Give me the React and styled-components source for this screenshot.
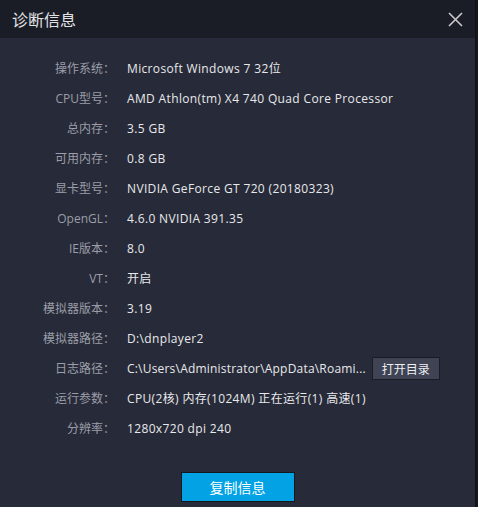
import React from "react";
import styled, { createGlobalStyle } from "styled-components";

const GlobalStyle = createGlobalStyle`
  html, body {
    margin: 0;
    padding: 0;
    background: #15171e;
  }
  body {
    font-family: "Open Sans", "Noto Sans CJK SC", sans-serif;
  }
`;

const Page = styled.div`
  display: flex;
  width: 478px;
  height: 507px;
  overflow: hidden;
`;

const Dialog = styled.div`
  width: 476px;
  height: 507px;
  display: flex;
  flex-direction: column;
  background: #272a38;
  border-right: 1px solid #101117;
  box-sizing: border-box;
`;

const Header = styled.div`
  height: 38px;
  flex: 0 0 38px;
  display: flex;
  align-items: center;
  justify-content: space-between;
  padding: 0 12px 0 12px;
  background: #1b1d26;
  box-sizing: border-box;
`;

const Title = styled.div`
  font-family: "Noto Sans CJK SC", sans-serif;
  font-size: 16px;
  color: #e2e3e6;
`;

const CloseButton = styled.button`
  width: 16px;
  height: 16px;
  padding: 0;
  border: none;
  background: transparent;
  display: flex;
  align-items: center;
  justify-content: center;
  cursor: pointer;
`;

const Body = styled.div`
  flex: 1;
  display: flex;
  flex-direction: column;
  padding-top: 15px;
`;

const InfoList = styled.div`
  display: grid;
  grid-template-columns: 115px 1fr;
  grid-auto-rows: 30px;
  column-gap: 12px;
`;

const Label = styled.div`
  display: flex;
  align-items: center;
  justify-content: flex-end;
  font-size: 12px;
  color: #9b9ea8;
  white-space: nowrap;
`;

const Value = styled.div`
  display: flex;
  align-items: center;
  gap: 6px;
  font-size: 12px;
  letter-spacing: 0.35px;
  color: #e8e9ec;
  white-space: nowrap;
`;

/* long file paths are set a little tighter */
const PathText = styled.span`
  letter-spacing: 0.2px;
`;

const SmallButton = styled.button`
  height: 23px;
  padding: 0 9px;
  background: #3f4354;
  border: 1px solid #1a1c24;
  color: #eceef2;
  font-family: "Noto Sans CJK SC", sans-serif;
  font-size: 12px;
  letter-spacing: 0;
  cursor: pointer;
`;

const Footer = styled.div`
  display: flex;
  justify-content: center;
  margin-top: 29px;
`;

const PrimaryButton = styled.button`
  width: 114px;
  height: 30px;
  background: #03a2e4;
  border: 1px solid #15171e;
  color: #ffffff;
  font-family: "Noto Sans CJK SC", sans-serif;
  font-size: 14px;
  cursor: pointer;
`;

const rows = [
  ["操作系统", "Microsoft Windows 7 32位"],
  ["CPU型号", "AMD Athlon(tm) X4 740 Quad Core Processor"],
  ["总内存", "3.5 GB"],
  ["可用内存", "0.8 GB"],
  ["显卡型号", "NVIDIA GeForce GT 720 (20180323)"],
  ["OpenGL", "4.6.0 NVIDIA 391.35"],
  ["IE版本", "8.0"],
  ["VT", "开启"],
  ["模拟器版本", "3.19"],
  ["模拟器路径", "D:\\dnplayer2"],
  ["日志路径", "C:\\Users\\Administrator\\AppData\\Roami...", "打开目录"],
  ["运行参数", "CPU(2核) 内存(1024M) 正在运行(1) 高速(1)"],
  ["分辨率", "1280x720 dpi 240"],
];

export default function App() {
  return (
    <Page>
      <GlobalStyle />
      <Dialog>
        <Header>
          <Title>诊断信息</Title>
          <CloseButton aria-label="关闭">
            <svg width="15" height="15" viewBox="0 0 15 15">
              <path d="M1 1 L14 14 M14 1 L1 14" stroke="#c9cacd" strokeWidth="1.6" />
            </svg>
          </CloseButton>
        </Header>
        <Body>
          <InfoList>
            {rows.map(([label, value, action]) => (
              <React.Fragment key={label}>
                <Label>{label}：</Label>
                <Value>
                  {action ? <PathText>{value}</PathText> : value}
                  {action && <SmallButton>{action}</SmallButton>}
                </Value>
              </React.Fragment>
            ))}
          </InfoList>
          <Footer>
            <PrimaryButton>复制信息</PrimaryButton>
          </Footer>
        </Body>
      </Dialog>
    </Page>
  );
}
